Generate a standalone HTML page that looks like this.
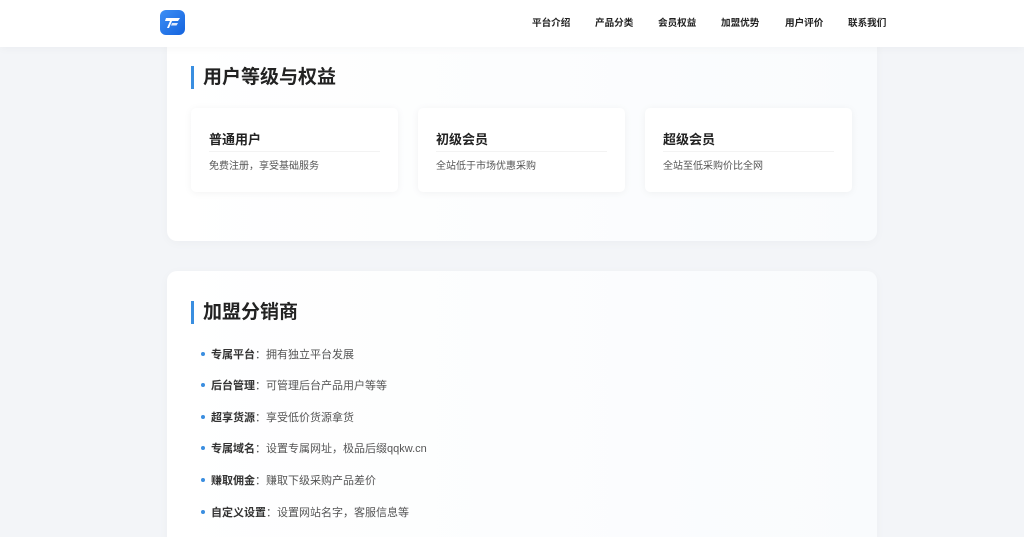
<!DOCTYPE html>
<html><head><meta charset="utf-8"><style>
*{margin:0;padding:0;box-sizing:border-box}
html,body{width:1024px;height:537px;overflow:hidden}
body{background:#f3f5f8;font-family:"Liberation Sans","Noto Sans CJK SC",sans-serif;color:#333;position:relative}
.hdr{position:absolute;left:0;top:0;width:1024px;height:47px;background:#fff;box-shadow:0 2px 8px rgba(0,0,0,.03);z-index:2}
.logo{position:absolute;left:160px;top:10px;width:25px;height:25px;border-radius:6px;background:linear-gradient(135deg,#3d8ff5,#1463de)}
.nav a{position:absolute;top:15px;font-size:9.6px;font-weight:bold;color:#222;text-decoration:none;white-space:nowrap}
.card{position:absolute;left:167px;width:710px;background:linear-gradient(90deg,#fff,#f9fbfd);border-radius:10px;box-shadow:0 2px 10px rgba(0,0,0,.03)}
.tt{position:absolute;left:24px;height:23px;border-left:3px solid #3a8ee0;padding-left:9px;font-size:19px;font-weight:bold;line-height:23px;color:#222}
.sc{position:absolute;top:61px;width:207px;height:84px;background:#fff;border-radius:5px;box-shadow:0 1px 8px rgba(0,0,0,.05)}
.sc h4{position:absolute;left:18px;top:21px;font-size:13px;color:#222}
.sc hr{position:absolute;left:18px;right:18px;top:43px;border:0;border-top:1px solid #f3f3f3}
.sc p{position:absolute;left:18px;top:49px;font-size:10px;color:#555}
.li{position:absolute;left:44px;font-size:11px;color:#555;white-space:nowrap}
.li b{color:#333}
.li:before{content:"";position:absolute;left:-10px;top:6px;width:4px;height:4px;border-radius:50%;background:#3a8ee0}
</style></head><body>
<div class="hdr">
<div class="logo"><svg width="25" height="25" viewBox="0 0 25 25"><path d="M6 8h14l-2 3h-6l-3 7-2 0 3-7H5z" fill="#fff"/><path d="M12 13h6l-1.5 2.5h-5.5z" fill="#dfe9fb"/></svg></div>
<div class="nav">
<a style="left:532px">平台介绍</a><a style="left:595px">产品分类</a><a style="left:658px">会员权益</a><a style="left:721px">加盟优势</a><a style="left:785px">用户评价</a><a style="left:848px">联系我们</a>
</div></div>
<div class="card" style="top:40px;height:201px;border-radius:0 0 10px 10px">
<div class="tt" style="top:26px">用户等级与权益</div>
<div class="sc" style="left:24px;top:68px"><h4>普通用户</h4><hr><p>免费注册，享受基础服务</p></div>
<div class="sc" style="left:251px;top:68px"><h4>初级会员</h4><hr><p>全站低于市场优惠采购</p></div>
<div class="sc" style="left:478px;top:68px"><h4>超级会员</h4><hr><p>全站至低采购价比全网</p></div>
</div>
<div class="card" style="top:271px;height:290px">
<div class="tt" style="top:30px">加盟分销商</div>
<div class="li" style="top:75px"><b>专属平台</b>：拥有独立平台发展</div>
<div class="li" style="top:106px"><b>后台管理</b>：可管理后台产品用户等等</div>
<div class="li" style="top:138px"><b>超享货源</b>：享受低价货源拿货</div>
<div class="li" style="top:169px"><b>专属域名</b>：设置专属网址，极品后缀qqkw.cn</div>
<div class="li" style="top:201px"><b>赚取佣金</b>：赚取下级采购产品差价</div>
<div class="li" style="top:233px"><b>自定义设置</b>：设置网站名字，客服信息等</div>
</div>
</body></html>
